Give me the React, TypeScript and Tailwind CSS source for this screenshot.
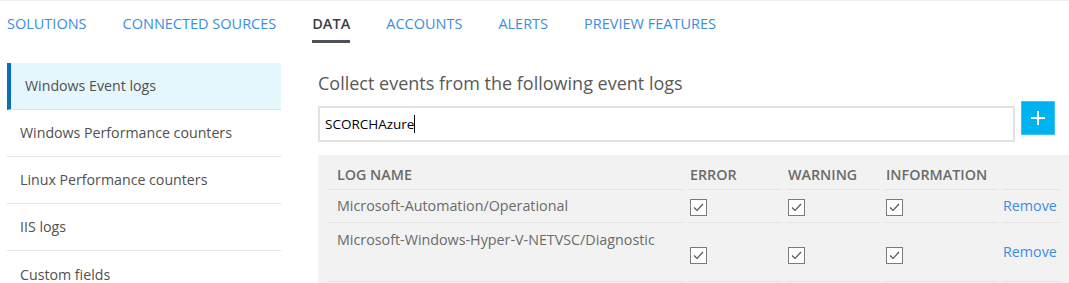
import React from 'react';

const tabs = ['SOLUTIONS', 'CONNECTED SOURCES', 'DATA', 'ACCOUNTS', 'ALERTS', 'PREVIEW FEATURES'];
const sideItems = ['Windows Event logs', 'Windows Performance counters', 'Linux Performance counters', 'IIS logs', 'Custom fields'];

const Check: React.FC = () => (
  <span className="inline-flex w-[17px] h-[17px] items-center justify-center border border-[#7a7a7a] bg-white">
    <svg width="11" height="9" viewBox="0 0 11 9" fill="none" stroke="#555" strokeWidth="1.2">
      <path d="M1 4.5l3 3L10 1" />
    </svg>
  </span>
);

const App: React.FC = () => {
  return (
    <div className="w-[1069px] h-[283px] overflow-hidden bg-white border-t border-[#efefef]" style={{ fontFamily: '"Open Sans", "Noto Sans", sans-serif' }}>
      <nav className="flex items-start gap-[36px] pl-[7px] h-[42px] pt-[12px]">
        {tabs.map((t) => (
          <div key={t} className="flex flex-col">
            <span className={`text-[14.5px] leading-[21px] ${t === 'DATA' ? 'text-[#3b3f45] font-semibold' : 'text-[#3a8ee0]'}`}>{t}</span>
            {t === 'DATA' && <span className="mt-[6px] h-[3px] bg-[#4c5159]" />}
          </div>
        ))}
      </nav>

      <div className="flex mt-[20px]">
        <aside className="ml-[7px] w-[275px] flex flex-col">
          {sideItems.map((s, i) => (
            <div
              key={s}
              className={`h-[47px] flex items-center text-[14.2px] text-[#505050] border-b border-[#e3e3e3] ${
                i === 0 ? 'bg-[#e5f6fd] border-l-[4px] border-l-[#0a6fc2] pl-[14px]' : 'pl-[13px]'
              } ${i === sideItems.length - 1 ? 'border-b-0' : ''}`}
            >
              {s}
            </div>
          ))}
        </aside>

        <main className="ml-[37px] flex-1 flex flex-col">
          <h2 className="text-[18px] leading-[24px] text-[#595959] mt-[8px]">Collect events from the following event logs</h2>
          <div className="flex items-start mt-[6px]">
            <div className="mt-[5px] w-[697px] h-[36px] border-2 border-[#e2e2e2] flex items-center pl-[5px] text-[13.5px] text-black">
              SCORCHAzure<span className="w-px h-[18px] bg-black" />
            </div>
            <button className="ml-[6px] w-[34px] h-[34px] bg-[#00b3f0] border border-[#3cc4f4] flex items-center justify-center">
              <svg width="14" height="14" viewBox="0 0 14 14" stroke="white" strokeWidth="2">
                <path d="M7 0v14M0 7h14" />
              </svg>
            </button>
          </div>

          <div className="mt-[13px] bg-[#f2f2f2] pl-[11px] pr-[9px] pt-[4px] h-[140px] text-[14.3px]">
            <div className="grid grid-cols-[355px_94px_94px_114px_58px] gap-x-[4px]">
              {['LOG NAME', 'ERROR', 'WARNING', 'INFORMATION', ''].map((h, i) => (
                <div key={i} className={`h-[31px] flex items-center pt-[2px] border-b border-[#e4e4e4] text-[14.3px] font-semibold text-[#6b6b6b] ${i === 0 ? 'pl-[8px]' : 'pl-[2px]'}`}>
                  {h}
                </div>
              ))}

              <div className="h-[33px] flex items-center pl-[8px] pb-[1px] text-[#6b6b6b] border-b border-[#e4e4e4]">Microsoft-Automation/Operational</div>
              {[0, 1, 2].map((k) => (
                <div key={k} className="h-[33px] flex items-center pl-[2px] pt-[2px] border-b border-[#e4e4e4]"><Check /></div>
              ))}
              <div className="h-[33px] flex items-center pl-[1px] pb-[1px] text-[#3a8ee0] border-b border-[#e4e4e4]">Remove</div>

              <div className="h-[59px] pl-[8px] pt-[6px] text-[#6b6b6b] border-b border-[#e4e4e4]">Microsoft-Windows-Hyper-V-NETVSC/Diagnostic</div>
              {[0, 1, 2].map((k) => (
                <div key={k} className="h-[59px] flex items-start pl-[2px] pt-[24px] border-b border-[#e4e4e4]"><Check /></div>
              ))}
              <div className="h-[59px] pl-[1px] pt-[18px] text-[#3a8ee0] border-b border-[#e4e4e4]">Remove</div>
            </div>
          </div>
        </main>
      </div>
    </div>
  );
};

export default App;
